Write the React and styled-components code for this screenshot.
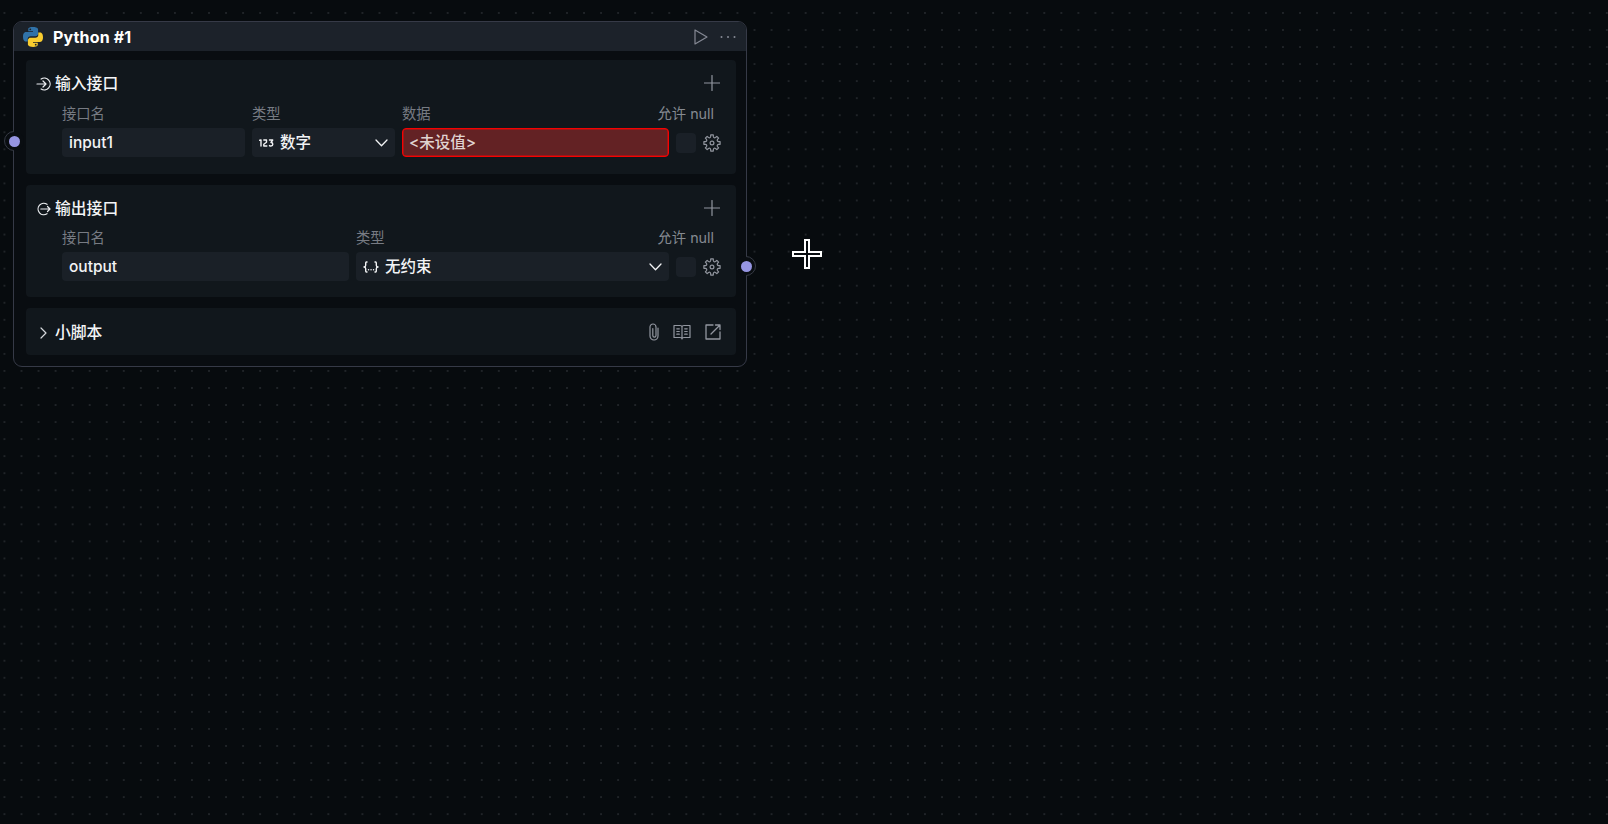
import React from "react";
import styled, { createGlobalStyle } from "styled-components";

const Global = createGlobalStyle`
  * { box-sizing: border-box; }
  body { margin: 0; background: #070b0e; overflow: hidden; }
`;
const Canvas = styled.main`
  position: relative;
  width: 100vw;
  height: 100vh;
  overflow: hidden;
  background-color: #070b0e;
  background-image: radial-gradient(circle at 1px 1px, #202428 0.8px, transparent 1.1px);
  background-size: 17.05px 17.05px;
  background-position: 3.5px 12px;
  font: 500 15.5px/20px Inter, "Noto Sans CJK SC", sans-serif;
  color: #f0f2f5;
`;
const Node = styled.section`
  position: absolute;
  left: 13px;
  top: 21px;
  width: 734px;
  height: 346px;
  border: 1px solid #363a47;
  border-radius: 9px;
  background: #090d11;
`;
const Header = styled.header`
  height: 29px;
  display: flex;
  align-items: center;
  padding: 0 10px 0 9px;
  border-radius: 8px 8px 0 0;
  background: #1c222a;
  color: #858994;
`;
const Title = styled.h1`
  flex: 1;
  margin: 1px 0 0 10px;
  font-size: 16px;
  line-height: 20px;
  font-weight: 700;
  letter-spacing: 0.15px;
  color: #fff;
`;
const Body = styled.div`
  display: flex;
  flex-direction: column;
  gap: 11px;
  padding: 9px 10px 0 12px;
`;
const Panel = styled.section`
  height: ${(p) => p.$height}px;
  padding: ${(p) => p.$top}px 14px 0 10px;
  border-radius: 4px;
  background: #11171c;
  color: #92969f;
`;
const PanelHead = styled.div`
  display: flex;
  align-items: center;
  height: 20px;
`;
const PanelTitle = styled.h2`
  flex: 1;
  margin: 0 0 0 4px;
  font-size: 15.8px;
  line-height: 20px;
  font-weight: 500;
  color: #f4f5f7;
`;
const Grid = styled.div`
  display: grid;
  grid-template-columns: ${(p) => p.$columns};
  column-gap: 7px;
  align-items: center;
  margin: ${(p) => p.$top}px -1px 0 26px;
`;
const Label = styled.span`
  font-size: 14.3px;
  line-height: 20px;
  height: 20px;
  font-weight: 400;
  margin-bottom: 4px;
  color: #777b83;
  white-space: nowrap;
`;
const NullLabel = styled(Label)`
  grid-column: span 2;
  justify-self: end;
  margin-right: 7px;
  color: #858a91;
`;
const Field = styled.div`
  display: flex;
  align-items: center;
  gap: 6px;
  height: 29px;
  padding: 0 ${(p) => (p.$error ? 6 : 7)}px;
  border-radius: 4px;
  background: ${(p) => (p.$error ? "#632224" : "#1a2027")};
  border: ${(p) => (p.$error ? "1px solid #f50202" : "0")};
  box-shadow: ${(p) => (p.$error ? "inset 0 0 0 0.5px #e00808" : "none")};
  color: ${(p) => (p.$error ? "#e0d4d1" : "#f2f3f5")};
`;
const Value = styled.span`
  flex: 1;
  white-space: nowrap;
`;
const Check = styled.span`
  width: 20px;
  height: 20px;
  border-radius: 4px;
  background: #1a2027;
`;
const Actions = styled.div`
  display: flex;
  align-items: center;
  gap: ${(p) => p.$gap}px;
  margin: ${(p) => p.$margin || 0};
`;
const Port = styled.span`
  position: absolute;
  left: ${(p) => (p.$right ? 722 : -10)}px;
  top: ${(p) => (p.$right ? 234 : 109)}px;
  width: 20px;
  height: 20px;
  display: grid;
  place-items: center;
  border-radius: 50%;
  background: #090d11;
  &::before {
    content: "";
    position: absolute;
    inset: 0;
    border: 1px solid #363a44;
    border-radius: 50%;
    clip-path: ${(p) => (p.$right ? "inset(0 0 0 10px)" : "inset(0 10px 0 0)")};
  }
  &::after { content: ""; width: 11px; height: 11px; border-radius: 50%; background: #9695e2; }
`;
const Cursor = styled.svg`
  position: absolute;
  left: 791px;
  top: 238px;
`;
const Icon = styled.svg`
  display: block;
  flex: none;
  fill: none;
  stroke: currentColor;
  stroke-width: ${(p) => p.$stroke || 1.2};
  stroke-linecap: round;
  stroke-linejoin: round;
`;

const Plus = () => (
  <Actions $gap={0} $margin="-2px 2px 0 0">
    <Icon width="16" height="16" viewBox="0 0 16 16"><path d="M8 .5v15M.5 8h15" /></Icon>
  </Actions>
);
const Chevron = () => <Icon width="13" height="8" viewBox="0 0 13 8" $stroke={1.3}><path d="m1 1 5.5 5.7L12 1" /></Icon>;
const InIcon = () => <Icon width="15" height="14" viewBox="0 0 15 14" color="#eceef1"><path d="M1 7h9M7 4l3 3-3 3M5.1 2A5.9 5.9 0 1 1 5.1 12" /></Icon>;
const OutIcon = () => <Icon width="15" height="14" viewBox="0 0 15 14" color="#eceef1"><path d="M4.8 7H14M11.5 4.5 14 7l-2.5 2.5M11 2.3a5.7 5.7 0 1 0 0 9.4" /></Icon>;
const Gear = () => {
  const points = Array.from({ length: 8 }, (_, i) => {
    const p = (a, r) => {
      const t = ((i * 45 + a) * Math.PI) / 180;
      return `${(9 + Math.sin(t) * r).toFixed(2)} ${(9 - Math.cos(t) * r).toFixed(2)}`;
    };
    return `${i ? "L" : "M"}${p(-9, 8.2)} L${p(9, 8.2)} L${p(12, 6.5)} Q${p(22.5, 5.1)} ${p(33, 6.5)}`;
  });
  return <Icon width="18" height="18" viewBox="0 0 18 18"><path d={points.join(" ") + "Z"} /><circle cx="9" cy="9" r="1.9" /></Icon>;
};
const PythonLogo = () => (
  <svg width="20" height="20" viewBox="0 0 110 110">
    <path fill="#3072a8" d="M54 0C27 0 29 12 29 12v12h26v4H18S0 26 0 54c0 27 16 26 16 26h10V67s-1-16 16-16h26s15 0 15-15V15S85 0 54 0ZM40 8a5 5 0 1 1 0 10 5 5 0 0 1 0-10Z" />
    <path fill="#f9cd2f" d="M56 110c27 0 25-12 25-12V86H55v-4h37s18 2 18-26c0-27-16-26-16-26H84v13s1 16-16 16H42s-15 0-15 15v21s-2 15 29 15Zm14-8a5 5 0 1 1 0-10 5 5 0 0 1 0 10Z" />
  </svg>
);
const NumberIcon = () => <Icon width="15" height="8" viewBox="0 0 15 8" $stroke={1.4}><path d="M.7 1.3 2 1v6M4.8 1h2.7v2.3L4.8 5.2V7h3M10.5 1h3.2L12 3.5c2.4 0 2.4 3.5 0 3.5-1 0-1.5-.4-1.5-.4" /></Icon>;
const ObjectIcon = () => <Icon width="16" height="12" viewBox="0 0 16 12" $stroke={1.4}><path d="M4 1h-.6q-.7 0-.7 1v2.3Q2.7 5.8 1 6q1.7.2 1.7 1.7V10q0 1 .7 1H4M12 1h.6q.7 0 .7 1v2.3Q13.3 5.8 15 6q-1.7.2-1.7 1.7V10q0 1-.7 1H12M5.5 8.8h.1M8 8.8h.1M10.5 8.8h.1" /></Icon>;
const PaperclipIcon = () => <Icon width="10" height="18" viewBox="0 0 10 18"><path d="M9 5v8a4 4 0 0 1-8 0V4a3 3 0 0 1 6 0v8.5a1.6 1.6 0 0 1-3.2 0V5.5" /></Icon>;
const BookIcon = () => <Icon width="18" height="16" viewBox="0 0 18 16"><path d="M1 1.5h6Q9 1.5 9 3q0-1.5 2-1.5h6v12h-6Q9 13.5 9 15q0-1.5-2-1.5H1ZM9 3v12M3.8 4.8h2.5M3.8 7.5h2.5M3.8 10.2h2.5M11.7 4.8h2.5M11.7 7.5h2.5M11.7 10.2h2.5" /></Icon>;
const OpenIcon = () => <Icon width="16" height="16" viewBox="0 0 16 16" $stroke={1.3}><path d="M8 1H1v14h14V8M10.5 1H15v4.5M15 1 6 10" /></Icon>;

export default function App() {
  return (
    <Canvas>
      <Global />
      <Node>
        <Header>
          <PythonLogo />
          <Title>Python #1</Title>
          <Actions $gap={12}>
            <Icon width="14" height="16" viewBox="0 0 14 16"><path d="M1 1v14l12-7Z" /></Icon>
            <Icon width="16" height="4" viewBox="0 0 16 4" $stroke={2}><path d="M1.5 2h.01M8 2h.01M14.5 2h.01" /></Icon>
          </Actions>
        </Header>
        <Body>
          <Panel $height={114} $top={14}>
            <PanelHead><InIcon /><PanelTitle>输入接口</PanelTitle><Plus /></PanelHead>
            <Grid $columns="183px 143px 267px 20px 18px" $top={10}>
              <Label>接口名</Label><Label>类型</Label><Label>数据</Label><NullLabel>允许 null</NullLabel>
              <Field><Value>input1</Value></Field>
              <Field><NumberIcon /><Value>数字</Value><Chevron /></Field>
              <Field $error><Value>&lt;未设值&gt;</Value></Field>
              <Check /><Gear />
            </Grid>
          </Panel>
          <Panel $height={112} $top={14}>
            <PanelHead><OutIcon /><PanelTitle>输出接口</PanelTitle><Plus /></PanelHead>
            <Grid $columns="287px 313px 20px 18px" $top={9}>
              <Label>接口名</Label><Label>类型</Label><NullLabel>允许 null</NullLabel>
              <Field><Value>output</Value></Field>
              <Field><ObjectIcon /><Value>无约束</Value><Chevron /></Field>
              <Check /><Gear />
            </Grid>
          </Panel>
          <Panel $height={47} $top={15}>
            <PanelHead>
              <Icon width="15" height="12" viewBox="0 0 15 12" color="#d5d8dc"><path d="m5 1 5 5-5 5" /></Icon>
              <PanelTitle>小脚本</PanelTitle>
              <Actions $gap={14} $margin="-2px 1px 0 0"><PaperclipIcon /><BookIcon /><OpenIcon /></Actions>
            </PanelHead>
          </Panel>
        </Body>
        <Port />
        <Port $right />
      </Node>
      <Cursor width="32" height="32" viewBox="0 0 32 32">
        <path d="M14 2h4v12h12v4H18v12h-4V18H2v-4h12Z" fill="#080c10" stroke="#fff" strokeWidth="2" />
      </Cursor>
    </Canvas>
  );
}
